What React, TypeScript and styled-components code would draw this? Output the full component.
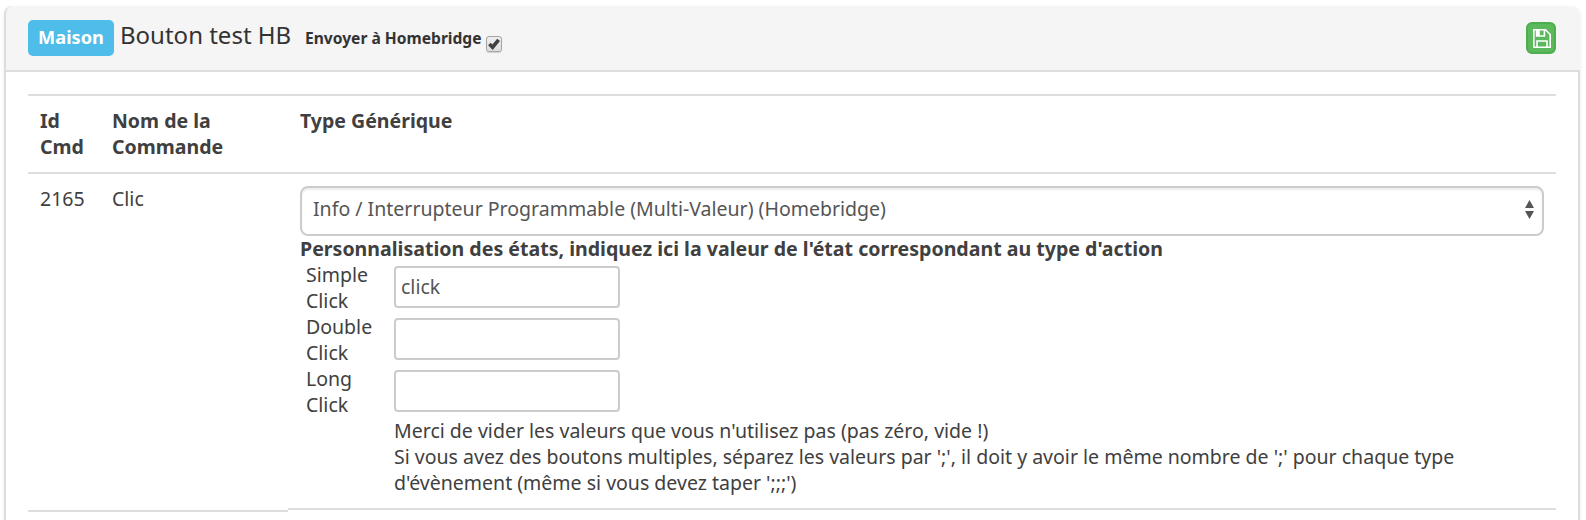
import React from 'react';
import styled, { createGlobalStyle } from 'styled-components';

const GlobalStyle = createGlobalStyle`
  * { box-sizing: border-box; }
  body {
    margin: 0;
    height: 520px;
    overflow: hidden;
    background: #fff;
    color: #404040;
    font-family: 'Noto Sans', sans-serif;
    font-size: 19.53px;
    line-height: 26px;
  }
`;

const Panel = styled.section`
  margin: 6px 6px 0 4px;
  height: 540px;
  border-radius: 8px;
  box-shadow: 0 2px 4px rgba(0, 0, 0, 0.07);
`;

const PanelHeader = styled.header`
  display: flex;
  align-items: flex-start;
  height: 66px;
  padding: 14px 24px 0 22px;
  border: 2px solid #ddd;
  border-width: 0 0 2px 2px;
  border-radius: 8px 8px 0 0;
  background: #f5f5f5;
  color: #333;
`;

const RoomLabel = styled.span`
  width: 86px;
  height: 36px;
  border-radius: 5px;
  background: #4fbde9;
  color: #fff;
  font-size: 18.2px;
  font-weight: 700;
  line-height: 35px;
  text-align: center;
`;

const DeviceName = styled.span`
  margin-left: 6px;
  width: 171px;
  font-size: 24px;
  line-height: 30px;
  white-space: nowrap;
`;

const SendLabel = styled.label`
  display: flex;
  margin-left: 14px;
  font-size: 15.6px;
  font-weight: 700;
  line-height: 37px;
  white-space: nowrap;
`;

const CheckMark = styled.span`
  display: flex;
  margin: 16px 0 0 4px;
  width: 16px;
  height: 16px;
  border: 1px solid #a5a5a5;
  border-radius: 3px;
  background: linear-gradient(#ededed, #dedede);
  box-shadow: 0 1px 1px rgba(0, 0, 0, 0.15);
`;

const SaveButton = styled.button`
  display: flex;
  align-items: center;
  justify-content: center;
  margin: 2px 0 0 auto;
  padding: 0 0 0 2px;
  width: 30px;
  height: 32px;
  border: 2px solid #4cae4c;
  border-radius: 6px;
  background: #5cb85c;
`;

const PanelBody = styled.div`
  height: 474px;
  padding: 22px 22px 0;
  border: 2px solid #ddd;
  border-width: 0 2px;
`;

const Table = styled.div`
  display: grid;
  grid-template-columns: 72px 188px 1268px;
`;

const Cell = styled.div<{ $head?: boolean }>`
  height: ${p => (p.$head ? 78 : 338)}px;
  padding: 12px 12px 0;
  border-top: 2px solid #ddd;
  font-weight: ${p => (p.$head ? 700 : 400)};
`;

const Rule = styled.div<{ $raised?: boolean }>`
  grid-column: ${p => (p.$raised ? '3' : '1 / 3')};
  margin-top: ${p => (p.$raised ? -2 : 0)}px;
  border-top: 2px solid #ddd;
`;

const Select = styled.div`
  display: flex;
  justify-content: space-between;
  height: 50px;
  padding: 8px 8px 0 11px;
  border: 2px solid #ccc;
  border-radius: 8px;
  box-shadow: inset 0 2px 2px rgba(0, 0, 0, 0.075);
  color: #555;
`;

const Arrows = styled.svg`
  margin-top: 4px;
  fill: #555;
`;

const Caption = styled.div`
  font-size: 19.57px;
  font-weight: 700;
  white-space: nowrap;
`;

const StateRow = styled.div`
  display: grid;
  grid-template-columns: 88px 226px;
  height: 52px;
  padding-left: 6px;
`;

const Field = styled.input`
  margin-top: 4px;
  width: 226px;
  height: 42px;
  padding: 0 5px 1px;
  border: 2px solid #ccc;
  border-radius: 4px;
  outline: none;
  color: #555;
  font: inherit;
`;

const StateName = styled.span`
  width: 70px;
`;

const Help = styled.p`
  margin: 0 0 0 94px;
  white-space: nowrap;
`;

const SaveIcon = () => (
  <svg width="18" height="19" viewBox="0 0 18 19" fill="none" stroke="#fff" strokeWidth="1.6">
    <path d="M.8 .8H12.5L17.2 5.5V18.2H.8Z" />
    <path d="M4 18V12H14V18" />
    <path d="M3.6 1V7H11.4V1" />
    <path d="M5 1V7" strokeWidth="3.6" />
  </svg>
);

const states = [
  { name: 'Simple Click', value: 'click' },
  { name: 'Double Click', value: '' },
  { name: 'Long Click', value: '' },
];

export default function App() {
  return (
    <>
      <GlobalStyle />
      <Panel>
        <PanelHeader>
          <RoomLabel>Maison</RoomLabel>
          <DeviceName>Bouton test HB</DeviceName>
          <SendLabel>
            Envoyer à Homebridge
            <CheckMark>
              <svg width="14" height="14" viewBox="0 0 14 14" fill="none" stroke="#404040" strokeWidth="3.6">
                <path d="M2.4 7L5.6 10.2L11.6 2.8" />
              </svg>
            </CheckMark>
          </SendLabel>
          <SaveButton aria-label="Sauvegarder">
            <SaveIcon />
          </SaveButton>
        </PanelHeader>
        <PanelBody>
          <Table>
            <Cell $head>Id Cmd</Cell>
            <Cell $head>Nom de la Commande</Cell>
            <Cell $head>Type Générique</Cell>
            <Cell>2165</Cell>
            <Cell>Clic</Cell>
            <Cell>
              <Select>
                Info / Interrupteur Programmable (Multi-Valeur) (Homebridge)
                <Arrows width="10" height="20" viewBox="0 0 10 20">
                  <path d="M5.5 0L10 8H1ZM5.5 19L10 11H1Z" />
                </Arrows>
              </Select>
              <Caption>
                Personnalisation des états, indiquez ici la valeur de l'état correspondant au type d'action
              </Caption>
              {states.map(s => (
                <StateRow key={s.name}>
                  <StateName>{s.name}</StateName>
                  <Field defaultValue={s.value} />
                </StateRow>
              ))}
              <Help>
                Merci de vider les valeurs que vous n'utilisez pas (pas zéro, vide !)
                <br />
                Si vous avez des boutons multiples, séparez les valeurs par ';', il doit y avoir le même nombre de ';' pour chaque type
                <br />
                d'évènement (même si vous devez taper ';;;')
              </Help>
            </Cell>
            <Rule />
            <Rule $raised />
          </Table>
        </PanelBody>
      </Panel>
    </>
  );
}
